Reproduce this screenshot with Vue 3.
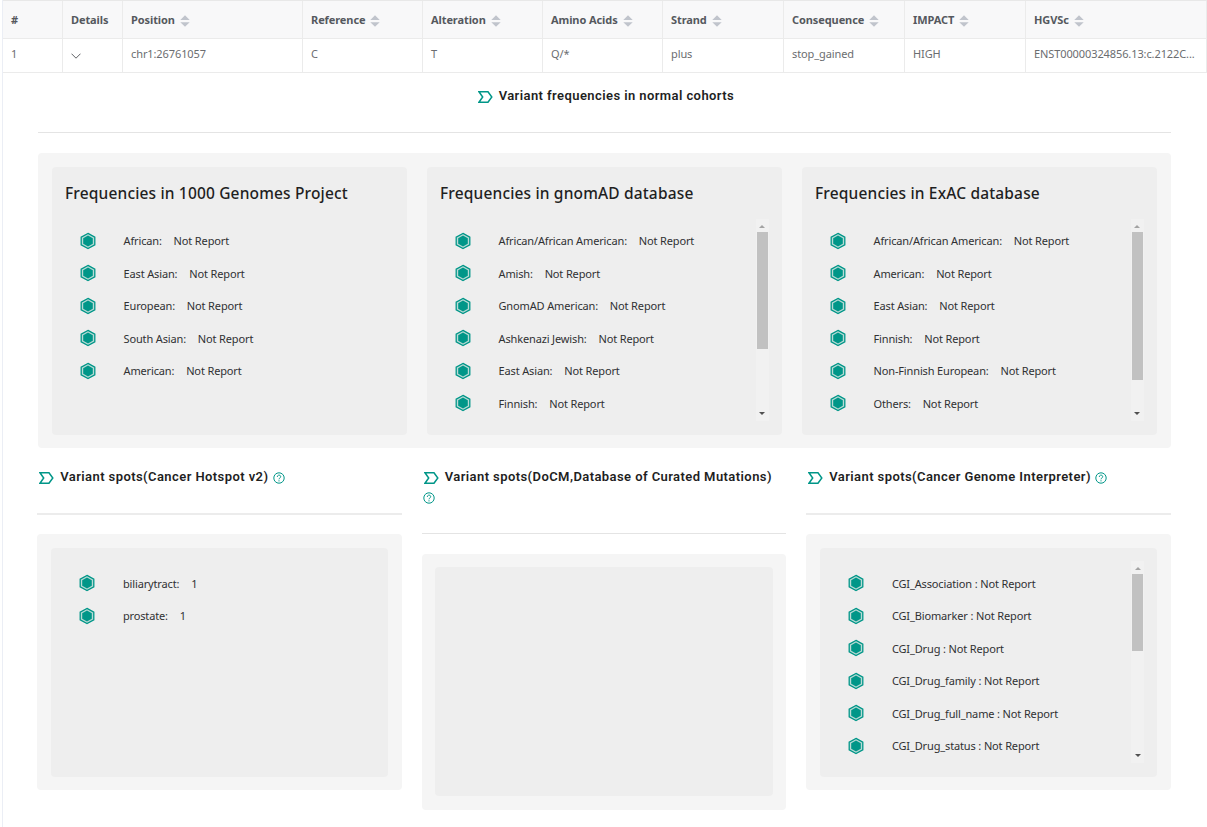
<script setup>
const columns = [
  { label: '#', value: '1' },
  { label: 'Details', expand: true },
  { label: 'Position', value: 'chr1:26761057', sort: true },
  { label: 'Reference', value: 'C', sort: true },
  { label: 'Alteration', value: 'T', sort: true },
  { label: 'Amino Acids', value: 'Q/*', sort: true },
  { label: 'Strand', value: 'plus', sort: true },
  { label: 'Consequence', value: 'stop_gained', sort: true },
  { label: 'IMPACT', value: 'HIGH', sort: true },
  { label: 'HGVSc', value: 'ENST00000324856.13:c.2122C...', sort: true },
]
const nr = (names) => names.map((n) => ({ name: n + ':', value: 'Not Report' }))
const cohorts = [
  { title: 'Frequencies in 1000 Genomes Project', items: nr(['African', 'East Asian', 'European', 'South Asian', 'American']) },
  { title: 'Frequencies in gnomAD database', thumb: 117, items: nr(['African/African American', 'Amish', 'GnomAD American', 'Ashkenazi Jewish', 'East Asian', 'Finnish']) },
  { title: 'Frequencies in ExAC database', thumb: 148, items: nr(['African/African American', 'American', 'East Asian', 'Finnish', 'Non-Finnish European', 'Others']) },
]
const spots = [
  { title: 'Variant spots(Cancer Hotspot v2)', items: [{ name: 'biliarytract:', value: '1' }, { name: 'prostate:', value: '1' }] },
  { title: 'Variant spots(DoCM,Database of Curated Mutations)', wrap: true, items: [] },
  {
    title: 'Variant spots(Cancer Genome Interpreter)',
    thumb: 77,
    items: ['Association', 'Biomarker', 'Drug', 'Drug_family', 'Drug_full_name', 'Drug_status'].map((n) => ({ name: 'CGI_' + n + ' : Not Report' })),
  },
]
</script>

<template>
  <div class="page">
    <div class="table">
      <div class="tr head">
        <div v-for="c in columns" :key="c.label" class="cell">
          <span>{{ c.label }}</span>
          <svg v-if="c.sort" class="sort" width="10" height="12" viewBox="0 0 10 12"><path d="M0.3 5 5 0.3 9.7 5zM0.3 7.2 5 11.8 9.7 7.2z" fill="#c0c4cc" /></svg>
        </div>
      </div>
      <div class="tr body">
        <div v-for="c in columns" :key="c.label" class="cell">
          <svg v-if="c.expand" class="chev" width="10" height="6" viewBox="0 0 10 6"><path d="M0.5 0.7 5 5.2 9.5 0.7" fill="none" stroke="#606266" stroke-width="1" /></svg>
          <span v-else>{{ c.value }}</span>
        </div>
      </div>
    </div>

    <div class="detail">
      <h3 class="heading center">
        <svg class="tag" width="15" height="12" viewBox="0 0 15 12"><path d="M1 0.8H10L13.8 6 10 11.2H1L4.7 6z" fill="none" stroke="#009688" stroke-width="1.5" /></svg>
        <span>Variant frequencies in normal cohorts</span>
      </h3>
      <div class="rule"></div>
      <div class="box cohorts">
        <section v-for="c in cohorts" :key="c.title" class="card">
          <h4>{{ c.title }}</h4>
          <div class="scroller">
            <ul>
              <li v-for="i in c.items" :key="i.name">
                <svg class="hex" width="16" height="18" viewBox="0 0 16 18"><path d="M8 1.4 14.8 5.2V12.8L8 16.6 1.2 12.8V5.2z" fill="#b9dad5" stroke="#009688" stroke-width="1.3" /><path d="M8 3.6 12.8 6.3V11.7L8 14.4 3.2 11.7V6.3z" fill="#009688" /></svg>
                <span>{{ i.name }}</span><span class="val">{{ i.value }}</span>
              </li>
            </ul>
            <div v-if="c.thumb" class="bar">
              <i class="up"></i>
              <div class="thumb" :style="{ height: c.thumb + 'px' }"></div>
              <i class="down"></i>
            </div>
          </div>
        </section>
      </div>

      <div class="spots">
        <div v-for="s in spots" :key="s.title">
          <h3 class="heading spot" :class="{ wrap: s.wrap }">
            <svg class="tag" width="15" height="12" viewBox="0 0 15 12"><path d="M1 0.8H10L13.8 6 10 11.2H1L4.7 6z" fill="none" stroke="#009688" stroke-width="1.5" /></svg>
            <span>{{ s.title }}</span>
            <br v-if="s.wrap" />
            <svg class="help" width="12" height="12" viewBox="0 0 12 12"><g fill="none" stroke="#009688" stroke-width="1"><circle cx="6" cy="6" r="5.2" /><path d="M4.3 4.9C4.3 2.6 7.7 2.6 7.7 4.7 7.7 6 6 5.9 6 7.3" /></g><circle cx="6" cy="8.8" r="0.65" fill="#009688" /></svg>
          </h3>
          <div class="rule" :class="{ thick: !s.wrap }"></div>
          <div class="box">
            <section class="card small">
              <div class="scroller">
                <ul>
                  <li v-for="i in s.items" :key="i.name">
                    <svg class="hex" width="16" height="18" viewBox="0 0 16 18"><path d="M8 1.4 14.8 5.2V12.8L8 16.6 1.2 12.8V5.2z" fill="#b9dad5" stroke="#009688" stroke-width="1.3" /><path d="M8 3.6 12.8 6.3V11.7L8 14.4 3.2 11.7V6.3z" fill="#009688" /></svg>
                    <span>{{ i.name }}</span><span v-if="i.value" class="val">{{ i.value }}</span>
                  </li>
                </ul>
                <div v-if="s.thumb" class="bar">
                  <i class="up"></i>
                  <div class="thumb" :style="{ height: s.thumb + 'px' }"></div>
                  <i class="down"></i>
                </div>
              </div>
            </section>
          </div>
        </div>
      </div>
    </div>
  </div>
</template>

<style>
body { background: #fff; overflow: hidden; }
</style>

<style scoped>
.page {
  box-sizing: border-box;
  width: 1205px;
  height: 827px;
  margin-left: 2px;
  border-left: 1px solid #ebeef5;
  overflow: hidden;
  font-family: "Segoe UI", "Noto Sans", "Open Sans", sans-serif;
  font-size: 11px;
  letter-spacing: -0.14px;
  color: #303133;
}
.table { width: 1204px; border-top: 1px solid #e8e8e8; }
.tr {
  display: grid;
  grid-template-columns: 60px 60px 180px 120px 120px 120px 121px 121px 121px 181px;
}
.cell {
  box-sizing: border-box;
  display: flex;
  align-items: center;
  padding-left: 8px;
  border-right: 1px solid #ebebeb;
  border-bottom: 1px solid #ebebeb;
  white-space: nowrap;
}
.head .cell { height: 38px; background: #f8f8f9; color: #55585e; font-weight: 700; padding-bottom: 1px; letter-spacing: -0.09px; }
.body .cell { height: 34px; padding-bottom: 4px; color: #6b6d70; letter-spacing: -0.1px; }
.sort { margin-left: 5px; margin-top: 3px; }
.chev { margin-top: 5px; }
.detail { padding: 0 35px; width: 1133px; margin-top: -1px; }
.heading {
  margin: 0;
  height: 60px;
  padding: 13px 0 0 2px;
  box-sizing: border-box;
  font: 600 13px/20px Roboto, sans-serif;
  letter-spacing: 0.42px;
  color: #1f1f1f;
  white-space: nowrap;
}
.heading.center { text-align: center; padding: 14px 0 0 3px; }
.heading.spot { height: 59px; }
.tag { margin-right: 2.5px; vertical-align: -3px; }
.heading span { margin-left: 3.3px; }
.help { margin-left: 4.5px; vertical-align: -3px; }
.rule { height: 1px; margin-bottom: 20px; background: #e4e4e4; }
.rule.thick { height: 2px; background: #ececec; margin-bottom: 19px; }
.box { box-sizing: border-box; padding: 13.5px; background: #f5f5f5; border-radius: 4px; }
.cohorts { display: grid; grid-template-columns: repeat(3, 355px); column-gap: 20px; height: 295px; }
.card {
  box-sizing: border-box;
  height: 268px;
  padding: 13px;
  background: #eee;
  border-radius: 4px;
  overflow: hidden;
}
.card.small { height: 229px; }
.small ul { padding-top: 6.5px; }
h4 { margin: 0; height: 39px; font-size: 15.5px; line-height: 27px; font-weight: 500; color: #1f1f1f; letter-spacing: 0.16px; white-space: nowrap; text-indent: 0.5px; }
.scroller { display: flex; justify-content: space-between; height: 202px; }
ul { list-style: none; margin: 0; padding: 6px 0 0 14px; }
li { display: flex; align-items: center; height: 32.5px; white-space: nowrap; }
.hex { margin: 0 28px 0 1px; }
.val { margin-left: 11.8px; }
.bar { box-sizing: border-box; width: 13px; height: 202px; padding: 13px 1px; background: #f1f1f1; position: relative; }
.thumb { background: #c1c1c1; }
.up, .down { position: absolute; left: 3.5px; width: 0; height: 0; border: 3px solid transparent; }
.up { top: 6px; border-top: 0; border-bottom-color: #a3a3a3; }
.down { bottom: 6px; border-bottom: 0; border-top-color: #505050; }
.spots { display: grid; grid-template-columns: repeat(3, 364.5px); column-gap: 20px; margin-left: -0.6px; margin-top: 6px; }
.heading.wrap { height: 79px; }
.wrap + .rule { margin-bottom: 19.5px; }
.heading.wrap .help { margin-left: -1px; }
</style>
